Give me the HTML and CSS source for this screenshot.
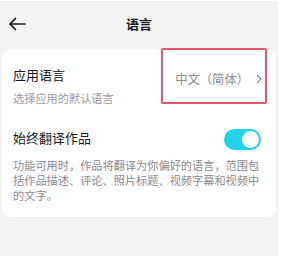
FILE: index.html
```html
<!DOCTYPE html>
<html lang="zh">
<head>
<meta charset="utf-8">
<link rel="stylesheet" href="styles.css">
</head>
<body>
<div class="page">
  <header class="topbar">
    <svg class="back" width="18" height="14" viewBox="0 0 18 14"><path d="M17 7H2M7.5 1.5L2 7l5.5 5.5" fill="none" stroke="#161823" stroke-width="1.7" stroke-linecap="round" stroke-linejoin="round"/></svg>
    <div class="title">语言</div>
  </header>
  <section class="card">
    <div class="row lang-row">
      <div class="left">
        <div class="label">应用语言</div>
        <div class="sub">选择应用的默认语言</div>
      </div>
      <div class="value">
        <span>中文（简体）</span>
        <svg width="6" height="10" viewBox="0 0 6 10"><path d="M1 1l4 4-4 4" fill="none" stroke="#8a8b91" stroke-width="1.1"/></svg>
      </div>
    </div>
    <div class="row toggle-row">
      <div class="label">始终翻译作品</div>
      <div class="toggle"><div class="knob"></div></div>
    </div>
    <p class="desc">功能可用时，作品将翻译为你偏好的语言，范围包括作品描述、评论、照片标题、视频字幕和视频中的文字。</p>
  </section>
  <div class="highlight"></div>
</div>
</body>
</html>
```
FILE: styles.css
```css
html, body {
  margin: 0;
  padding: 0;
  background: #ffffff;
}
body {
  font-family: "Noto Sans CJK SC", "Noto Sans", sans-serif;
  color: #161823;
}
.page {
  position: relative;
  margin: 1px 3px 0 0;
  height: 255px;
  background: #f3f3f3;
  overflow: hidden;
}
.topbar {
  position: relative;
  height: 49px;
  display: flex;
  align-items: center;
  justify-content: center;
}
.back {
  position: absolute;
  left: 8px;
  top: 16px;
}
.title {
  font-size: 13px;
  font-weight: 700;
  line-height: 18px;
  margin-top: -3px;
}
.card {
  margin: 0 2px;
  background: #ffffff;
  border-radius: 8px;
  padding: 16px 14px 14px 11px;
}
.row {
  display: flex;
  justify-content: space-between;
  align-items: flex-start;
}
.label {
  font-size: 13px;
  line-height: 18px;
  color: #161823;
}
.sub {
  margin-top: 7px;
  font-size: 11.2px;
  line-height: 15px;
  color: #9b9b9f;
}
.value {
  display: flex;
  align-items: center;
  gap: 7px;
  margin-top: 4px;
  height: 18px;
  font-size: 12.3px;
  color: #8a8b91;
}
.toggle-row {
  margin-top: 23px;
}
.toggle {
  width: 37px;
  height: 21px;
  border-radius: 11px;
  background: #22d3e7;
  display: flex;
  align-items: center;
  justify-content: flex-end;
  padding: 0 2px;
  box-sizing: border-box;
  margin-right: 1px;
}
.knob {
  width: 17px;
  height: 17px;
  border-radius: 50%;
  background: #ffffff;
}
.desc {
  margin: 8px 0 0;
  font-size: 11.2px;
  line-height: 15px;
  color: #8a8a8f;
}
.highlight {
  position: absolute;
  left: 161px;
  top: 47px;
  width: 102px;
  height: 52px;
  border: 2px solid #f2536b;
  border-radius: 2px;
}
```
